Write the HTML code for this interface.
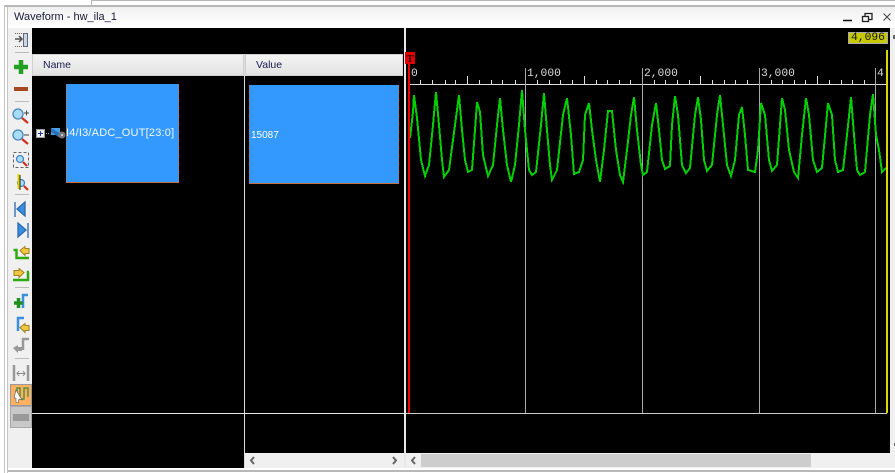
<!DOCTYPE html>
<html><head><meta charset="utf-8"><style>
html,body{margin:0;padding:0;background:#fff}
#r{position:relative;width:895px;height:473px;overflow:hidden;background:#fff;font-family:"Liberation Sans",sans-serif}
#r div{position:absolute}
.hd{background:linear-gradient(#f4f4f4,#e2e2e2);border:1px solid #d0d0d0;box-sizing:border-box;font-size:10.500px;color:#1c1c50;line-height:20px}
</style></head><body><div id="r">
<div style="left:91px;top:0;width:804px;height:1px;background:#b5b5b5"></div>
<div style="left:91px;top:0;width:1px;height:5px;background:#b5b5b5"></div>
<div style="left:4px;top:5px;width:891px;height:2px;background:#b8b8b8"></div>
<div style="left:4px;top:5px;width:1px;height:468px;background:#c4c4c4"></div>
<div style="left:7px;top:7px;width:1px;height:466px;background:#c4c4c4"></div>
<div style="left:8px;top:7px;width:887px;height:20px;background:linear-gradient(#f0f0f0,#fff)"></div>
<div style="left:14px;top:10px;font-size:11px;line-height:15px;color:#1a1a3a;white-space:nowrap">Waveform - hw_ila_1</div>
<div style="left:8px;top:28px;width:24px;height:440px;background:#f0f0f0"></div>
<div style="left:32px;top:28px;width:858px;height:425px;background:#000"></div>
<div style="left:890px;top:28px;width:5px;height:440px;background:#f0f0f0"></div>
<div style="left:32px;top:453px;width:212px;height:15px;background:#000"></div>
<div style="left:245px;top:453px;width:650px;height:15px;background:#f0f0f0"></div>
<div style="left:8px;top:470px;width:887px;height:2px;background:#b8b8b8"></div>
<div class="hd" style="left:32px;top:54px;width:212px;height:22px;padding-left:10px">Name</div>
<div class="hd" style="left:245px;top:54px;width:158px;height:22px;padding-left:10px">Value</div>
<div style="left:244px;top:54px;width:1px;height:414px;background:#ddd"></div>
<div style="left:404px;top:28px;width:2px;height:440px;background:#e8e8e8"></div>
<div style="left:32px;top:413px;width:372px;height:1px;background:#e8e8e8"></div>
<div style="left:66px;top:84px;width:113px;height:99px;background:#3399ff;border-bottom:1px solid #c87040;border-left:1px dotted #b08060;border-right:1px dotted #b08060;box-sizing:border-box"></div>
<div style="left:249px;top:85px;width:150px;height:99px;background:#3399ff;border-bottom:1px solid #c87040;border-left:1px dotted #b08060;border-right:1px dotted #b08060;box-sizing:border-box"></div>
<div style="left:66px;top:126px;font-size:11px;line-height:14px;letter-spacing:.2px;color:#f4f8ff;white-space:nowrap">I4/I3/ADC_OUT[23:0]</div>
<div style="left:251px;top:129px;font-size:10px;line-height:13px;color:#fff">15087</div>
<svg style="position:absolute;left:34px;top:125px" width="34" height="16"><rect x="2.500" y="4.500" width="8" height="8" fill="#eee" stroke="#999"/><path d="M4 8.500h5M6.500 6v5" stroke="#223399"/><path d="M12 8.500h4" stroke="#aaa" stroke-dasharray="1 1"/><rect x="17" y="3" width="9" height="7" fill="#4aa0e8"/><path d="M17 3l12 7-3 3-9-6z" fill="#2a70b8"/><circle cx="28" cy="10" r="3.500" fill="#777"/><circle cx="28" cy="10" r="1" fill="#ddd"/></svg>

<svg style="position:absolute;left:405px;top:50px" width="490" height="370">
<g transform="translate(-405,-50)">
<path d="M410 84.500H886" stroke="#ddd"/>
<path d="M525.500 68V413M642.500 68V413M759.500 68V413M875.500 68V413" stroke="#a8a8a8"/>
<path d="M420.500 80V84M432.500 80V84M445.500 80V84M455.500 80V84M479.500 80V84M491.500 80V84M502.500 80V84M515.500 80V84M537.500 80V84M549.500 80V84M560.500 80V84M572.500 80V84M596.500 80V84M607.500 80V84M619.500 80V84M630.500 80V84M654.500 80V84M665.500 80V84M677.500 80V84M689.500 80V84M712.500 80V84M724.500 80V84M735.500 80V84M747.500 80V84M771.500 80V84M782.500 80V84M794.500 80V84M805.500 80V84M829.500 80V84M841.500 80V84M852.500 80V84M864.500 80V84M467.500 76V84M584.500 76V84M700.500 76V84M817.500 76V84" stroke="#ddd"/>
<path d="M405.500 413.500H887" stroke="#ccc"/>
<polyline fill="none" stroke="#00d000" stroke-width="2" shape-rendering="crispEdges" points="410,138 413,112 414,95 417,118 421,160 425,176 429,165 433,125 436,92 439,125 442,160 444,177 449,170 455,125 459,95 462,130 465,160 468,172 472,170 475,130 477,102 480,112 483,155 488,176 493,165 497,125 500,98 503,130 507,165 511,182 515,165 519,125 522,90 525,130 529,170 532,175 536,172 541,125 544,93 547,130 550,165 552,180 557,170 563,115 567,98 571,135 574,174 579,172 583,160 585,115 589,103 592,130 596,160 600,182 604,150 608,111 612,111 616,150 620,175 623,182 627,150 631,115 634,97 637,130 641,165 643,175 647,172 652,125 656,103 659,130 662,160 665,169 670,166 672,125 675,96 678,115 682,165 686,173 690,168 695,115 698,97 701,120 704,160 707,171 712,165 717,115 720,95 723,125 727,165 731,176 735,160 739,115 742,107 745,135 748,170 755,172 758,150 761,103 765,115 769,160 772,171 777,165 780,125 782,98 785,110 789,150 794,172 798,178 802,135 806,98 809,115 813,160 817,172 822,168 826,125 828,103 832,115 835,160 838,172 843,170 847,135 851,97 854,135 857,170 860,175 865,172 870,115 873,94 876,135 879,150 882,172 886,168"/>
<rect x="408" y="63" width="2" height="350" fill="#f00000"/>
<rect x="886" y="43" width="2" height="370" fill="#d8d800"/>
<rect x="405" y="52" width="10" height="12" fill="#e00000"/>
<text x="410" y="62" font-family="Liberation Serif,serif" font-size="11" font-weight="bold" text-anchor="middle" fill="#300">T</text>
<g font-family="Liberation Mono,monospace" font-size="11.300" fill="#ddd">
<text x="411" y="76">0</text><text x="527" y="76">1,000</text><text x="644" y="76">2,000</text><text x="761" y="76">3,000</text><text x="877" y="76">4</text>
</g></g></svg>

<div style="left:848px;top:32px;width:40px;height:12px;background:#c8c800;border:1px solid #aaa;box-sizing:border-box;font:11.300px/10px 'Liberation Mono',monospace;color:#111;text-align:center">4,096</div>

<svg style="position:absolute;left:0;top:0" width="895" height="473">
<path d="M843 20.500H852" stroke="#111" stroke-width="1.500"/>
<rect x="862.500" y="16.500" width="6" height="5" fill="none" stroke="#222" stroke-width="1.300"/><path d="M865 16v-2.500h7v6h-3" fill="none" stroke="#222" stroke-width="1.300"/>
<path d="M883.500 13.500l7 7M890.500 13.500l-7 7" stroke="#444"/>
<rect x="23.500" y="33.500" width="4" height="13" fill="#c8d8ea" stroke="#667"/><path d="M15 39h7M19 36l3 3-3 3" fill="none" stroke="#555" stroke-width="1.500"/><path d="M15 33.500h7M15 46.500h7" stroke="#666" stroke-dasharray="1 1"/>
<path d="M15 52.500H29M15 101.500H29M15 194.500H29M15 287.500H29M15 358.500H29" stroke="#bbb"/>
<path d="M14 67h14M21 60v14" stroke="#22a022" stroke-width="4.500"/>
<rect x="14" y="87" width="14" height="4" fill="#a84820"/>
<g fill="#a8dcf8" stroke="#4a88b8" stroke-width="1.300"><circle cx="18" cy="114" r="5"/><circle cx="18" cy="135" r="5"/><circle cx="20" cy="159" r="3.500"/><circle cx="21" cy="183" r="3.500"/></g>
<g stroke="#d03020" stroke-width="2.200"><path d="M22 118l6 5M22 139l6 5M23 162l4 4M24 186l4 4"/></g>
<path d="M24 113h5M26.500 110.500v5M24 135h5" stroke="#444"/>
<rect x="13.500" y="152.500" width="15" height="15" fill="none" stroke="#666" stroke-dasharray="3 2"/>
<path d="M18.500 174v15" stroke="#e0d000" stroke-width="2"/><path d="M20 175v15" stroke="#222"/>
<path d="M15 202v15M25 202v14L17 209z" fill="#3a90e0" stroke="#2a68b0" stroke-width="1.300"/>
<path d="M28 223v15M18 223v14l8-7z" fill="#3a90e0" stroke="#2a68b0" stroke-width="1.300"/>
<path d="M13.500 250h3v8h12.500" fill="none" stroke="#30a810" stroke-width="2.500"/>
<path d="M20 250.500l5-4v2h4v5h-4v2z" fill="#f0c840" stroke="#a08020"/>
<path d="M13 280h15v-8h1" fill="none" stroke="#30a810" stroke-width="2.500"/>
<path d="M24 272.500l-5-4v2h-5v5h5v2z" fill="#f0c840" stroke="#a08020"/>
<path d="M23 308v-13h5" fill="none" stroke="#3a90e0" stroke-width="2.500"/>
<path d="M14 303h9M18.500 298v10" stroke="#209020" stroke-width="3.500"/>
<path d="M18 331v-13h6" fill="none" stroke="#3a90e0" stroke-width="2.500"/>
<path d="M20 327.500l5-4v2h4v5h-4v2z" fill="#f0c840" stroke="#a08020"/>
<path d="M23 350v-11h6" fill="none" stroke="#999" stroke-width="2.500"/><path d="M13 348l5-3v2h4v4h-4v2z" fill="#999"/>
<path d="M14 365v16M28 365v16" stroke="#999" stroke-width="2.500"/><path d="M17 373.500h8M19 371l-2 2.500 2 2.500M23 371l2 2.500-2 2.500" fill="none" stroke="#888"/>
<rect x="10.500" y="384.500" width="21" height="21" fill="#ffb060" stroke="#999"/>
<path d="M17 397v-9h3v11h4v-11h4v9" fill="none" stroke="#5a9040" stroke-width="1.500"/>
<path d="M16 390l6 10-3-1-1 4-2-1v-4h-2z" fill="#fff" stroke="#555" stroke-width=".6"/>
<rect x="10.500" y="406.500" width="21" height="21" fill="#c8c8c8" stroke="#aaa"/>
<rect x="13" y="414" width="16" height="7" fill="#999"/>
<path d="M254 457l-3 3.500 3 3.500M393 457l3 3.500-3 3.500M415 457l-3 3.500 3 3.500" fill="none" stroke="#666" stroke-width="2"/>
<rect x="421" y="454" width="390" height="13" fill="#cdcdcd"/>
<rect x="893" y="35" width="2" height="4" fill="#666"/>
<rect x="894" y="443" width="1" height="3" fill="#666"/>
</svg>
</div></body></html>
